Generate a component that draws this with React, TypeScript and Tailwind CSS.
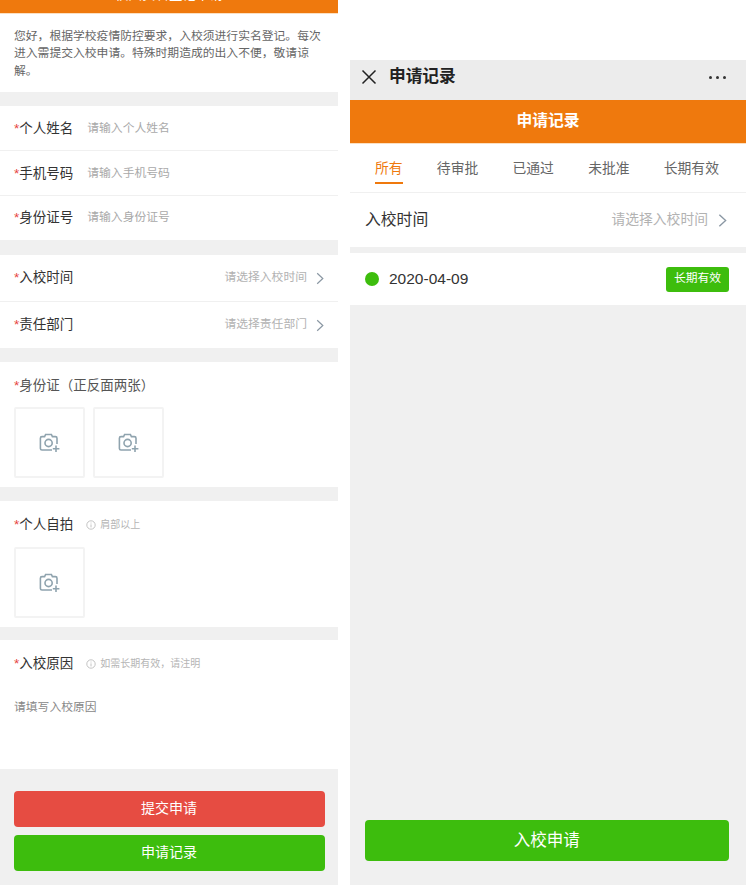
const font = { fontFamily: '"Liberation Sans", "Noto Sans CJK SC", sans-serif' };

function Chevron({ className = "" }: { className?: string }) {
  return (
    <svg viewBox="0 0 10 16" className={className} fill="none" stroke="#8a97a3" strokeWidth="1.5">
      <path d="M1.5 1.5 8.5 8 1.5 14.5" />
    </svg>
  );
}

function Camera() {
  return (
    <svg width="22" height="20" viewBox="0.5 0 21 20" fill="none" stroke="#8fa3ae" strokeWidth="1.6">
      <path d="M13 17H3a1.6 1.6 0 0 1-1.6-1.6V5.2A1.6 1.6 0 0 1 3 3.6h2.6L6.6 1.5h5.8l1 2.1h3a1.6 1.6 0 0 1 1.6 1.6V11" />
      <circle cx="9.6" cy="10" r="3.6" />
      <path d="M17 12.5v6.5M13.8 15.8h6.6" />
    </svg>
  );
}

function Info() {
  return (
    <svg width="10" height="10" viewBox="0 0 10 10" fill="none" stroke="#b5b5b5" strokeWidth="0.8" className="shrink-0">
      <circle cx="5" cy="5" r="4.2" />
      <path d="M5 4.4v3M5 2.6v.9" />
    </svg>
  );
}

function Label({ children }: { children: React.ReactNode }) {
  return (
    <div className="text-[13.5px] leading-5 text-[#333] whitespace-nowrap">
      <span className="text-[#e64340]">*</span>
      {children}
    </div>
  );
}

function InputRow({ label, hint, cls }: { label: string; hint: string; cls: string }) {
  return (
    <div className={`flex items-center px-[14px] bg-white ${cls}`}>
      <Label>{label}</Label>
      <span className="ml-[14px] text-[11.8px] text-[#a9a9a9]">{hint}</span>
    </div>
  );
}

function SelectRow({ label, hint, cls }: { label: string; hint: string; cls: string }) {
  return (
    <div className={`flex items-center justify-between px-[14px] bg-white ${cls}`}>
      <Label>{label}</Label>
      <div className="flex items-center gap-[9px]">
        <span className="text-[11.8px] text-[#b2b2b2]">{hint}</span>
        <Chevron className="w-[8px] h-[13px]" />
      </div>
    </div>
  );
}

function Upload() {
  return (
    <div className="w-[71px] h-[71px] border-2 border-[#f3f3f3] rounded-[2px] flex items-center justify-center bg-white">
      <Camera />
    </div>
  );
}

function Note({ children }: { children: React.ReactNode }) {
  return (
    <div className="ml-[13px] -mt-[1px] flex items-center gap-[4px] text-[10px] text-[#b5b5b5]">
      <Info />
      <span>{children}</span>
    </div>
  );
}

export default function App() {
  const tabs = ["所有", "待审批", "已通过", "未批准", "长期有效"];
  return (
    <div style={font} className="flex w-[746px] h-[885px] overflow-hidden bg-white">
      <div className="w-[338px] shrink-0 flex flex-col bg-[#f0f0f0]">
        <div className="h-[14px] bg-[#ef790d] border-b border-[#fbe0c2] overflow-hidden flex justify-center">
          <span className="text-[13.5px] leading-5 -mt-[15px] text-white whitespace-nowrap">校园实名登记申请</span>
        </div>
        <div className="h-[78px] bg-white pl-[14px] pr-[10px] pt-[13.5px] text-[11.8px] leading-[17.5px] text-[#666]">
          您好，根据学校疫情防控要求，入校须进行实名登记。每次进入需提交入校申请。特殊时期造成的出入不便，敬请谅解。
        </div>
        <div className="mt-[14px]">
          <InputRow label="个人姓名" hint="请输入个人姓名" cls="h-[45px] pt-[1px] border-b border-[#f0f0f0]" />
          <InputRow label="手机号码" hint="请输入手机号码" cls="h-[45px] pt-[1px] border-b border-[#f0f0f0]" />
          <InputRow label="身份证号" hint="请输入身份证号" cls="h-[44px]" />
        </div>
        <div className="mt-[15px]">
          <SelectRow label="入校时间" hint="请选择入校时间" cls="h-[47px] border-b border-[#f0f0f0]" />
          <SelectRow label="责任部门" hint="请选择责任部门" cls="h-[46px]" />
        </div>
        <div className="mt-[14px] h-[125px] bg-white px-[14px] pt-[14px]">
          <div className="text-[13.5px] leading-5 text-[#555]">
            <span className="text-[#e64340]">*</span>身份证（正反面两张）
          </div>
          <div className="flex gap-[8px] mt-[11px]">
            <Upload />
            <Upload />
          </div>
        </div>
        <div className="mt-[14px] h-[126px] bg-white px-[14px] pt-[14px]">
          <div className="flex items-center">
            <Label>个人自拍</Label>
            <Note>肩部以上</Note>
          </div>
          <div className="mt-[12px]">
            <Upload />
          </div>
        </div>
        <div className="mt-[13px] h-[129px] bg-white px-[14px] pt-[14px]">
          <div className="flex items-center">
            <Label>入校原因</Label>
            <Note>如需长期有效，请注明</Note>
          </div>
          <div className="mt-[23px] text-[11.8px] leading-[20px] text-[#888]">请填写入校原因</div>
        </div>
        <div className="px-[13.5px] pt-[22px] flex flex-col gap-[8px]">
          <div className="h-[36px] pb-[2px] rounded-[4px] bg-[#e64c42] text-white text-[14px] flex items-center justify-center">提交申请</div>
          <div className="h-[36px] pb-[2px] rounded-[4px] bg-[#3dbd0d] text-white text-[14px] flex items-center justify-center">申请记录</div>
        </div>
      </div>

      <div className="w-[12px] shrink-0 bg-white" />

      <div className="w-[396px] shrink-0 flex flex-col pt-[60px] bg-white">
        <div className="h-[40px] pb-[6px] bg-[#ececec] flex items-center pl-[11px] pr-[20px]">
          <svg width="16" height="16" viewBox="0 0 16 16" stroke="#222" strokeWidth="1.5" fill="none">
            <path d="M1.5 1.5 14.5 14.5M14.5 1.5 1.5 14.5" />
          </svg>
          <span className="ml-[12px] text-[16.7px] font-bold text-[#222]">申请记录</span>
          <div className="ml-auto flex gap-[4px]">
            <i className="block w-[3px] h-[3px] rounded-full bg-[#333]" />
            <i className="block w-[3px] h-[3px] rounded-full bg-[#333]" />
            <i className="block w-[3px] h-[3px] rounded-full bg-[#333]" />
          </div>
        </div>
        <div className="h-[44px] pb-[2px] bg-[#ef790d] border-b border-[#fbe0c2] flex items-center justify-center text-white text-[15.8px] font-bold">申请记录</div>
        <div className="h-[49px] pt-[1px] bg-white border-b border-[#f0f0f0] flex items-center justify-between pl-[25px] pr-[27px]">
          {tabs.map((t, i) => (
            <div key={t} className={`relative text-[13.8px] leading-5 ${i === 0 ? "text-[#ef790d]" : "text-[#666]"}`}>
              {t}
              {i === 0 && <div className="absolute left-0 right-0 -bottom-[5px] h-[2px] bg-[#ef790d]" />}
            </div>
          ))}
        </div>
        <div className="flex-1 bg-[#f0f0f0] flex flex-col">
          <div className="h-[54px] bg-white flex items-center justify-between pl-[15px] pr-[19px]">
            <span className="text-[15.8px] text-[#333]">入校时间</span>
            <div className="flex items-center gap-[10px]">
              <span className="text-[13.8px] text-[#b2b2b2]">请选择入校时间</span>
              <Chevron className="w-[9px] h-[15px]" />
            </div>
          </div>
          <div className="mt-[6px] h-[52px] bg-white flex items-center pl-[15px] pr-[17px]">
            <div className="w-[14px] h-[14px] rounded-full bg-[#3dbd0d]" />
            <span className="ml-[10px] text-[15.5px] text-[#333]">2020-04-09</span>
            <span className="ml-auto w-[63px] h-[25px] rounded-[3px] bg-[#3dbd0d] text-white text-[11.8px] flex items-center justify-center">长期有效</span>
          </div>
          <div className="mt-auto mb-[24px] ml-[14.5px] mr-[17px] h-[41px] rounded-[4px] bg-[#3dbd0d] text-white text-[16.5px] flex items-center justify-center">入校申请</div>
        </div>
      </div>
    </div>
  );
}
